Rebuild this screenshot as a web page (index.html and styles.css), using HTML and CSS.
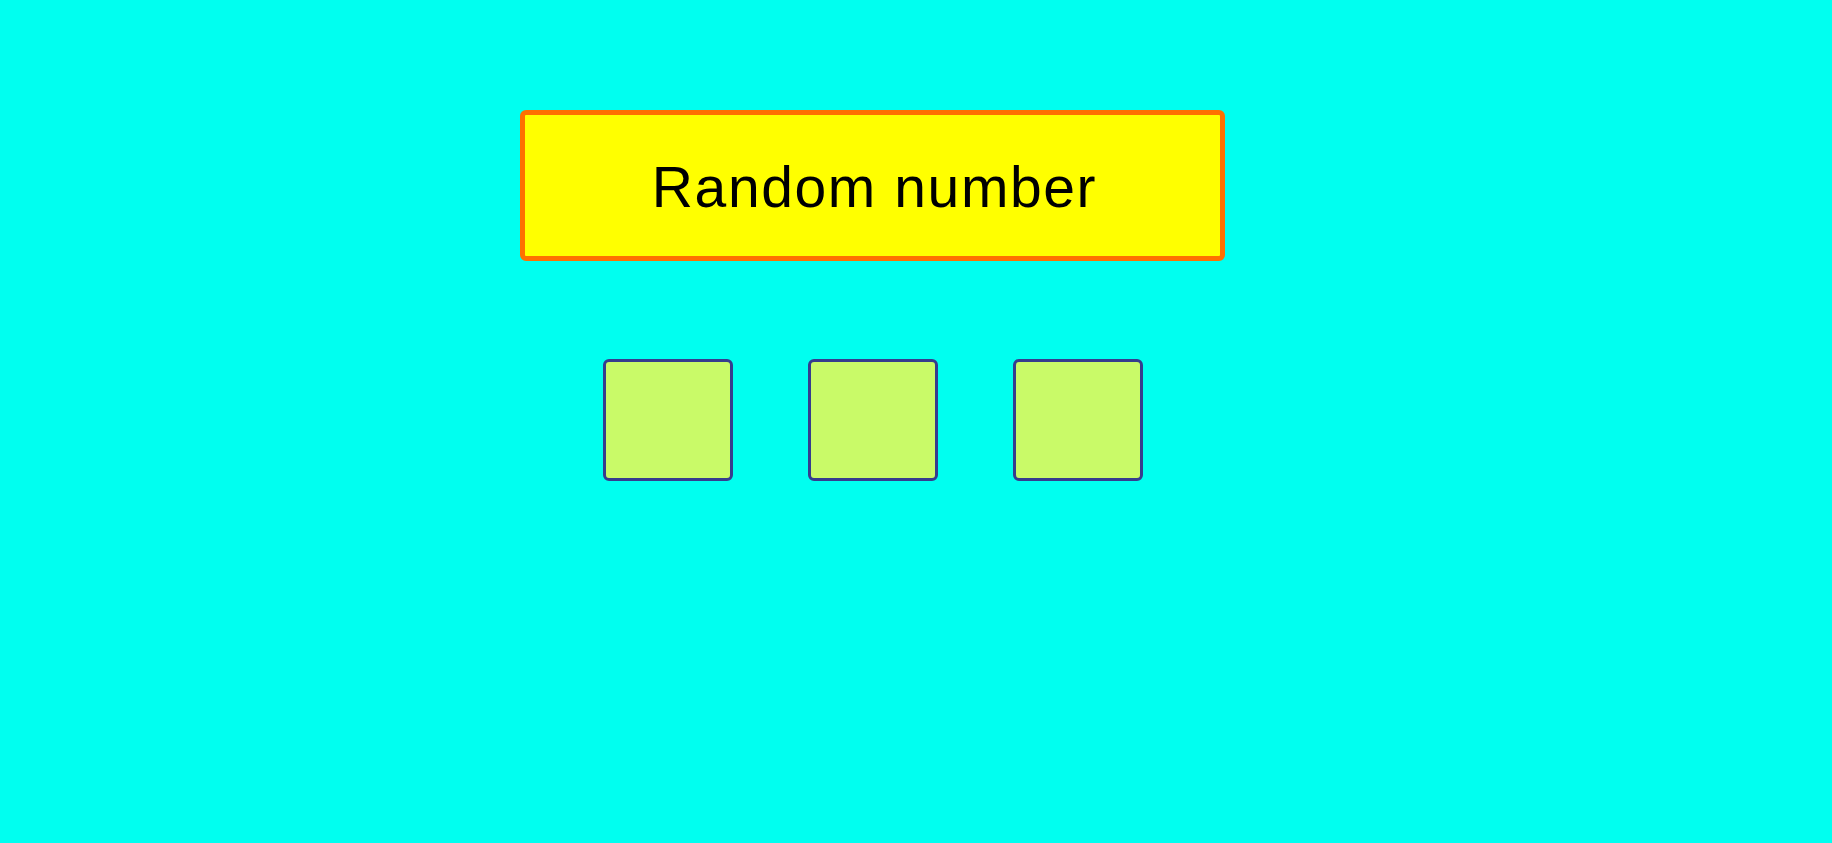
FILE: index.html
```html
<!DOCTYPE html>
<html>
<head>
<meta charset="utf-8">
<link rel="stylesheet" href="styles.css">
</head>
<body>
<main class="game">
  <div class="banner">Random number</div>
  <div class="slots">
    <div class="slot"></div>
    <div class="slot"></div>
    <div class="slot"></div>
  </div>
</main>
</body>
</html>
```
FILE: styles.css
```css
html, body {
  margin: 0;
  padding: 0;
  height: 100%;
}
body {
  background: #00fff0;
  font-family: "Liberation Sans", Arial, sans-serif;
}
.game {
  width: 705px;
  margin-left: 520px;
  padding-top: 110px;
}
.banner {
  box-sizing: border-box;
  height: 151px;
  background: #ffff00;
  border: 5px solid #ff7000;
  border-radius: 6px;
  display: flex;
  align-items: center;
  justify-content: center;
  font-size: 57px;
  letter-spacing: 1.6px;
  color: #000;
  padding-top: 2px;
  padding-left: 4px;
}
.slots {
  display: flex;
  justify-content: center;
  gap: 75px;
  margin-top: 98px;
}
.slot {
  box-sizing: border-box;
  width: 130px;
  height: 122px;
  background: #c9fa68;
  border: 3px solid #363c8e;
  border-radius: 6px;
}
```
